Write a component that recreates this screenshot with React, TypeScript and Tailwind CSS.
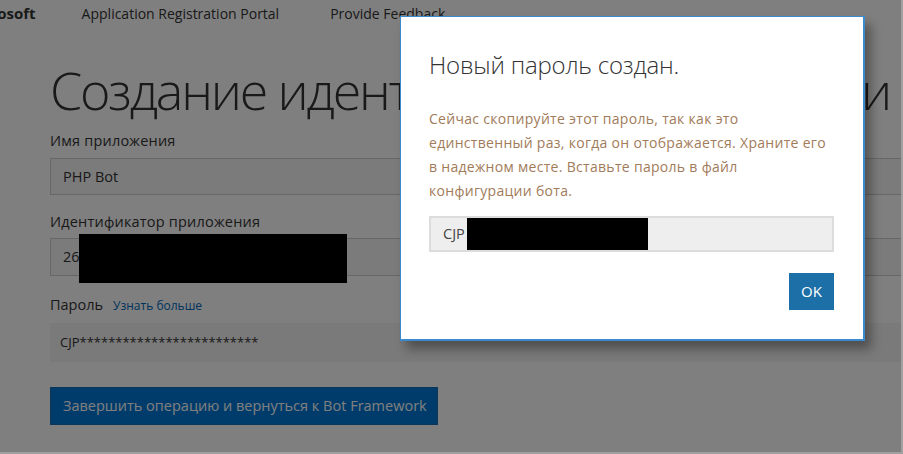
import React from "react";

export default function App() {
  return (
    <div className="relative w-[903px] h-[454px] overflow-hidden bg-white font-['Open_Sans',sans-serif] text-[#333]">
      {/* Page */}
      <div className="flex flex-col">
        <header className="flex items-center h-[27px] text-[14px] whitespace-nowrap">
          <span className="font-bold text-[15px] -ml-[36px]">Microsoft</span>
          <span className="ml-[46px]">Application Registration Portal</span>
          <span className="ml-[51px]">Provide Feedback</span>
        </header>
        <main className="pl-[50px] flex flex-col">
          <h1 className="mt-[37px] w-[840px] flex justify-between text-[52px] leading-[52px] font-light whitespace-nowrap tracking-[-2.2px]">
            <span>Создание идентификатора</span>
            <span>и</span>
          </h1>
          <label className="mt-[15px] h-[20px] leading-[20px] text-[14.5px] tracking-[0.2px]">Имя приложения</label>
          <div className="mt-[7px] h-[37px] border border-[#cfcfcf] bg-[#f7f7f7] flex items-center pl-[12px] text-[14.5px]">
            PHP Bot
          </div>
          <label className="mt-[17px] h-[20px] leading-[20px] text-[14.5px] tracking-[0.2px]">Идентификатор приложения</label>
          <div className="relative mt-[6px] h-[38px] border border-[#cfcfcf] bg-[#f7f7f7] flex items-center pl-[12px] text-[14.5px]">
            <span>26</span>
            <span className="ml-[258px]">7</span>
            <div className="absolute left-[28px] top-[-5px] w-[268px] h-[49px] bg-black" />
          </div>
          <div className="mt-[19px] h-[20px] flex items-baseline gap-[10px]">
            <span className="text-[14.5px] leading-[20px]">Пароль</span>
            <span className="text-[12px] text-[#0067b8]">Узнать больше</span>
          </div>
          <div className="mt-[8px] h-[39px] bg-[#f4f4f4] flex items-center pl-[10px] text-[13px]">
            CJP*************************
          </div>
          <div className="mt-[25px]">
            <button className="w-[388px] h-[38px] bg-[#0078d7] text-white text-[14.5px] text-left pl-[12px] border border-[#1a6ab0]">
              Завершить операцию и вернуться к Bot Framework
            </button>
          </div>
        </main>
      </div>

      {/* Modal overlay */}
      <div className="absolute inset-0 bg-black/50" />

      {/* Dialog */}
      <div className="absolute left-[400px] top-[16px] w-[465px] h-[325px] bg-white border-l border-t border-r-2 border-b-2 border-[#3a8ad0] shadow-[6px_8px_10px_rgba(0,0,0,0.35)] px-[28px] pt-[32px] flex flex-col">
        <h2 className="text-[24px] leading-[32px] font-light text-[#333] whitespace-nowrap tracking-[-0.2px]">Новый пароль создан.</h2>
        <p className="mt-[26px] text-[14px] leading-[24px] text-[#a27b5a] whitespace-nowrap tracking-[0.3px]">
          Сейчас скопируйте этот пароль, так как это
          <br />
          единственный раз, когда он отображается. Храните его
          <br />
          в надежном месте. Вставьте пароль в файл
          <br />
          конфигурации бота.
        </p>
        <div className="relative mt-[13px] w-[405px] h-[36px] bg-[#eeeeee] border-2 border-[#dcdcdc] flex items-center pl-[12px] text-[14.5px] text-[#444]">
          CJP
          <div className="absolute left-[36px] top-0 w-[181px] h-[32px] bg-black" />
        </div>
        <div className="mt-[21px] flex justify-end w-[405px]">
          <button className="w-[45px] h-[37px] bg-[#1c6fa7] text-white text-[15px]">OK</button>
        </div>
      </div>

      {/* Screenshot frame edges */}
      <div className="absolute right-0 top-0 bottom-0 w-[2px] bg-[#a0a0a0]" />
      <div className="absolute left-0 right-0 bottom-0 h-[2px] bg-[#a0a0a0]" />
    </div>
  );
}
